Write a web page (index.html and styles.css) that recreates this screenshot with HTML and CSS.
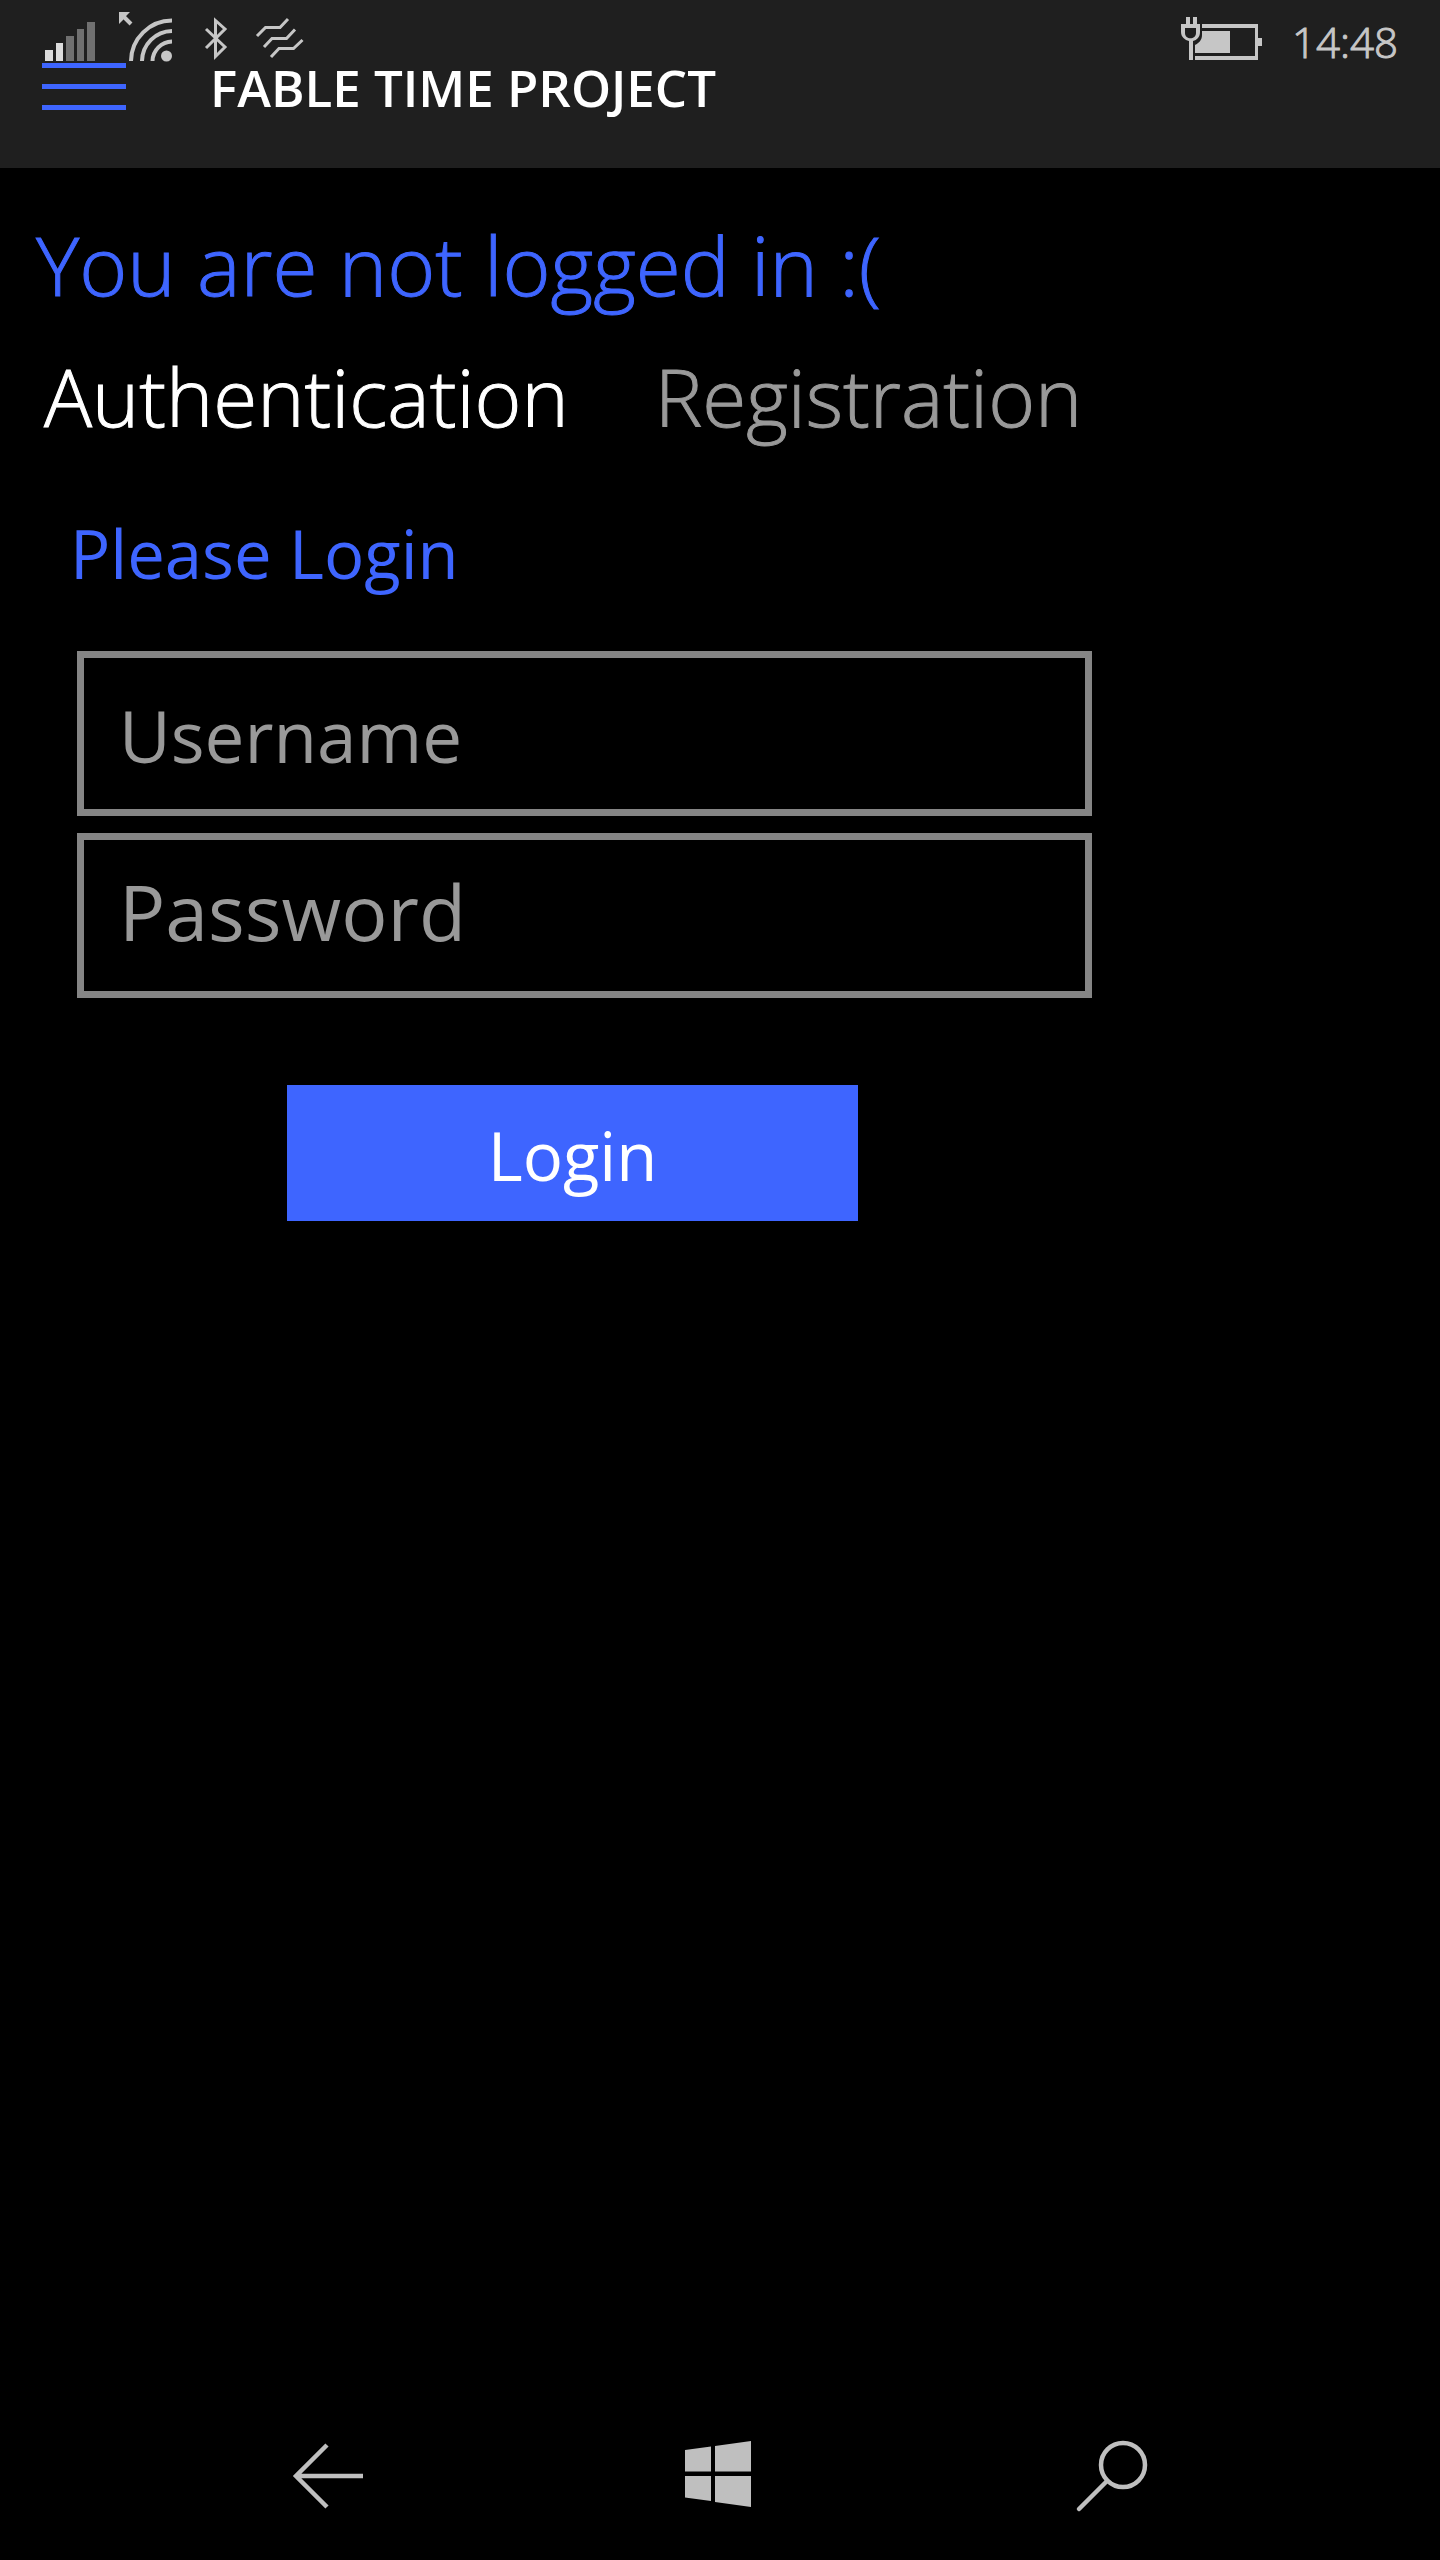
FILE: index.html
```html
<!DOCTYPE html>
<html lang="en">
<head>
<meta charset="utf-8">
<meta name="viewport" content="width=device-width, initial-scale=1">
<title>Fable Time Project</title>
<link rel="stylesheet" href="styles.css">
</head>
<body>
<header class="top">
  <div class="status">
    <div class="status-icons">
      <svg class="status-icon" width="290" height="62" viewBox="0 0 290 62" aria-hidden="true">
        <path fill="#dcdcdc" d="M45 50h8v11h-8zM56 43h7v18h-7z"/>
        <path fill="#707070" d="M66 36h8v25h-8zM77 29h7v32h-7zM87 22h8v39h-8z"/>
        <path fill="#c6c6c6" d="M119 12h11l-3 3-4 5-4 4z"/>
        <g fill="none" stroke="#c6c6c6" stroke-width="3">
          <path stroke-width="4" d="M121 14l10 10"/>
          <path stroke-width="4" d="M131 61a41 41 0 0 1 41-40.500M142 61a30.500 30.500 0 0 1 30-30M152.500 61a20 20 0 0 1 19.500-19.500"/>
          <path d="M206 29l19 18-9.500 9.500V20.500L225 29l-19 19"/>
          <path d="M257 36l8.500-8.500H280l8-8.500M264 47l8-8.500h14.500l8.500-9M271 57l8-8.500h14.500l9-8.500"/>
        </g>
        <circle cx="166.500" cy="56" r="5.500" fill="#c6c6c6"/>
      </svg>
    </div>
    <div class="status-right">
      <svg width="84" height="62" viewBox="0 0 84 62" aria-hidden="true">
        <path fill="#c6c6c6" d="M5 17h4v7h3v-7h4v7h3v8c0 5-3 8-7 9v19H8V41c-4-1-8-4-8-9v-8h5zM4 28v5c0 7 11 7 11 0v-5z" fill-rule="evenodd"/>
        <path fill="#c6c6c6" d="M21 24h56v14h4v8h-4v14H14v-4h60V28H21zM21 31h28v22H14v-8c4-2 7-5 7-10z"/>
      </svg>
      <time class="clock">14:48</time>
    </div>
  </div>
  <div class="appbar">
    <button class="menu" type="button" aria-label="Menu"><span></span><span></span><span></span></button>
    <h1 class="app-title">FABLE TIME PROJECT</h1>
  </div>
</header>
<main class="content">
  <h2 class="notice">You are not logged in :(</h2>
  <nav class="tabs" aria-label="Account">
    <a class="tab tab-active" href="#login" aria-current="page">Authentication</a>
    <a class="tab" href="#register">Registration</a>
  </nav>
  <form class="login" id="login">
    <h3 class="login-title">Please Login</h3>
    <div class="fields">
      <input class="field" type="text" placeholder="Username" aria-label="Username">
      <input class="field field-password" type="password" placeholder="Password" aria-label="Password">
      <button class="submit" type="submit">Login</button>
    </div>
  </form>
</main>
<nav class="keys" aria-label="System">
  <button class="key" type="button" aria-label="Back">
    <svg width="72" height="72" viewBox="0 0 72 72"><path fill="none" stroke="#bfbfbf" stroke-width="4.500" d="M72 36H5M36 5L5 36l31 31"/></svg>
  </button>
  <button class="key" type="button" aria-label="Start">
    <svg width="72" height="72" viewBox="0 0 72 72"><path fill="#bfbfbf" d="M1 10l26-3.500v25H1zM31 6l36-5v30.500H31zM1 36h26v25L1 57.500zM31 36h36v31l-36-5z"/></svg>
  </button>
  <button class="key" type="button" aria-label="Search">
    <svg width="72" height="72" viewBox="0 0 72 72"><g fill="none" stroke="#bfbfbf" stroke-width="4.500"><circle cx="46" cy="25" r="22"/><path stroke-linecap="round" d="M30 41L2 69"/></g></svg>
  </button>
</nav>
</body>
</html>
```
FILE: styles.css
```css
* { box-sizing: border-box; }

body {
  margin: 0;
  min-height: 100vh;
  display: flex;
  flex-direction: column;
  background: #000;
  color: #fff;
  font-family: "Open Sans", "Noto Sans", sans-serif;
}

h1, h2, h3 { margin: 0; }

button {
  border: 0;
  padding: 0;
  background: none;
  color: inherit;
  font: inherit;
  cursor: pointer;
}

svg { display: block; overflow: visible; }

.top { background: #1f1f1f; }

.status {
  display: flex;
  justify-content: space-between;
  height: 63px;
  padding-right: 42px;
}

.status-right { display: flex; gap: 27px; }

/* The light face is a little thin for these, so it gets a hairline stroke. */
.clock,
.notice,
.tab {
  font-weight: 300;
  -webkit-text-stroke: 1px currentColor;
}

.clock {
  color: #c6c6c6;
  font-size: 42px;
  line-height: 84px;
}

.appbar {
  display: flex;
  align-items: flex-start;
  gap: 84px;
  height: 105px;
  padding-left: 42px;
}

.menu {
  display: flex;
  flex-direction: column;
  gap: 16px;
  width: 84px;
}

.menu span { height: 5px; background: #3e65ff; }

.app-title {
  font-size: 51px;
  font-weight: 600;
  line-height: 48px;
}

.content { flex: 1; padding: 46px 36px 0; }

.notice {
  color: #3e65ff;
  font-size: 82px;
  line-height: 100px;
}

.tabs {
  display: flex;
  gap: 86px;
  padding: 30px 8px 0;
}

.tab {
  color: #999;
  font-size: 80px;
  line-height: 104px;
  text-decoration: none;
}

.tab-active { color: #fff; }

.login {
  max-width: 1056px;
  padding-top: 60px;
}

.login-title {
  padding-left: 34px;
  color: #3e65ff;
  font-size: 67px;
  font-weight: 400;
  line-height: 90px;
  margin-bottom: 53px;
}

.fields {
  display: flex;
  flex-direction: column;
  padding-left: 41px;
}

.field {
  width: 100%;
  height: 165px;
  margin-bottom: 17px;
  padding: 4px 36px 0 35px;
  border: 7px solid #858585;
  border-radius: 0;
  background: #000;
  color: #fff;
  font: 400 71px "Open Sans", "Noto Sans", sans-serif;
  outline: 0;
}

.field::placeholder { color: #999; opacity: 1; }

.field-password { font-size: 77px; padding-top: 0; padding-bottom: 8px; }

.submit {
  width: 571px;
  max-width: 100%;
  height: 136px;
  margin: 70px 0 0 210px;
  padding-top: 4px;
  background: #3e65ff;
  color: #fff;
  font-size: 67px;
}

.keys {
  display: grid;
  grid-template-columns: repeat(3, 1fr);
  height: 168px;
  padding: 0 131px;
}

.key {
  display: flex;
  align-items: center;
  justify-content: center;
}
```
